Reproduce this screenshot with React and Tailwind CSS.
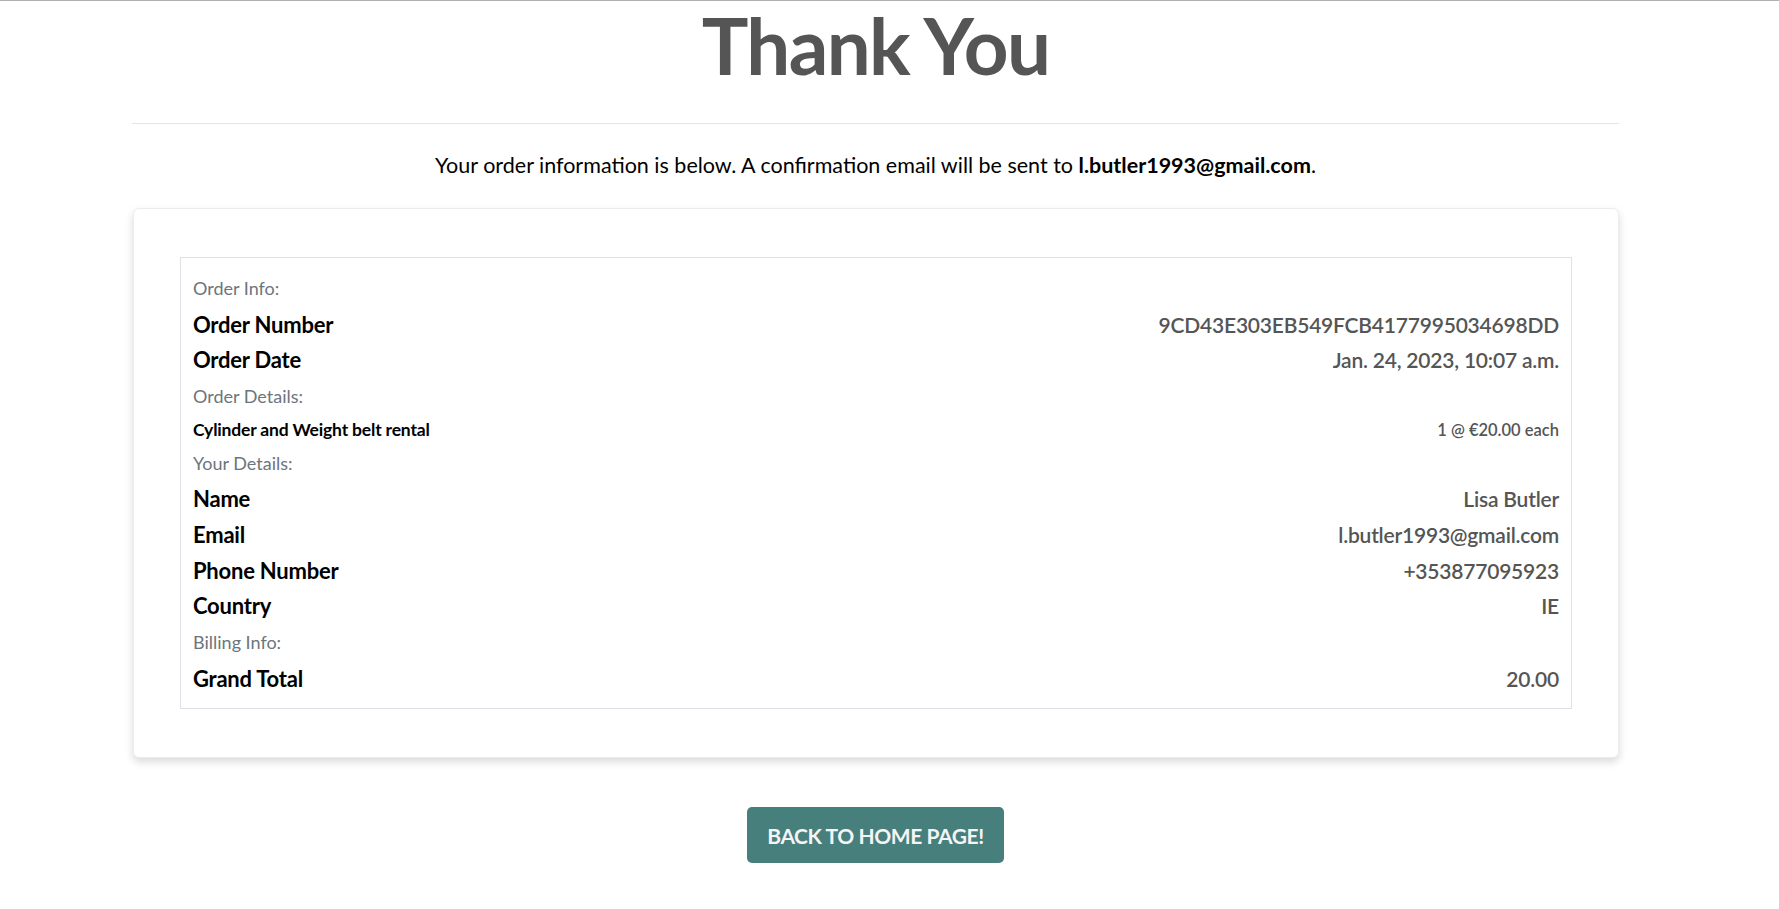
import React from "react";

const font = { fontFamily: "Lato, 'Liberation Sans', sans-serif" };

const order = {
    number: "9CD43E303EB549FCB4177995034698DD",
    date: "Jan. 24, 2023, 10:07 a.m.",
    item: "Cylinder and Weight belt rental",
    qty: "1 @ €20.00 each",
    name: "Lisa Butler",
    email: "l.butler1993@gmail.com",
    phone: "+353877095923",
    country: "IE",
    total: "20.00",
};

// section label, e.g. "Order Info:"
function Label({ children }) {
    return <div className="text-[18px] leading-[36.5px] text-[#6c757d]">{children}</div>;
}

function Row({ label, value }) {
    return (
        <div className="flex justify-between items-baseline leading-[35.75px]">
            <span className="text-[22px] font-bold text-black tracking-[-0.01em]">{label}</span>
            <span className="text-[21px] text-[#555] font-semibold tracking-[-0.01em]">{value}</span>
        </div>
    );
}

export default function App() {
    return (
        <div className="min-h-screen bg-white border-t border-[#b0b0b0]" style={font}>
            <div className="pl-[132px] pr-[160px]">
                <h1 className="mt-[5px] text-center text-[78px] leading-none font-bold text-[#555] tracking-[-0.02em]">
                    Thank You
                </h1>
                <hr className="mt-[39px] border-0 border-t border-[#e5e5e5]" />
                <p className="mt-[26px] text-center text-[21.5px] leading-[30px] text-black">
                    Your order information is below. A confirmation email will be sent to{" "}
                    <strong className="font-bold">{order.email}</strong>.
                </p>

                <div className="mt-[28px] ml-px bg-white border border-[#ececec] rounded-md shadow-[0_4px_8px_rgba(0,0,0,0.15)] px-[46px] py-12">
                    <div className="border border-[#dee2e6] p-3">
                        <Label>Order Info:</Label>
                        <Row label="Order Number" value={order.number} />
                        <Row label="Order Date" value={order.date} />

                        <Label>Order Details:</Label>
                        <div className="flex justify-between items-baseline leading-[30px]">
                            <span className="text-[17.5px] font-bold text-black tracking-[-0.01em]">{order.item}</span>
                            <span className="text-[16.5px] text-[#555] font-semibold">{order.qty}</span>
                        </div>

                        <Label>Your Details:</Label>
                        <Row label="Name" value={order.name} />
                        <Row label="Email" value={order.email} />
                        <Row label="Phone Number" value={order.phone} />
                        <Row label="Country" value={order.country} />

                        <Label>Billing Info:</Label>
                        <Row label="Grand Total" value={order.total} />
                    </div>
                </div>

                <div className="flex justify-center mt-[49px] pb-10">
                    <button className="h-14 px-5 rounded-[5px] bg-[#467f7c] text-[#f4f4f4] text-[21px] font-bold uppercase tracking-[-0.02em]">
                        Back to home page!
                    </button>
                </div>
            </div>
        </div>
    );
}
